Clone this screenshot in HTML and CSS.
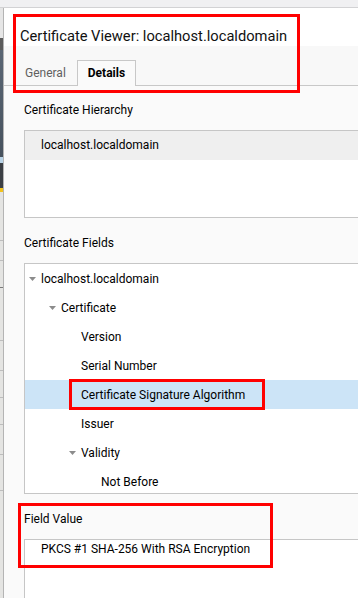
FILE: index.html
```html
<!DOCTYPE html>
<html lang="en">
<head>
<meta charset="utf-8">
<title>Certificate Viewer</title>
<link rel="stylesheet" href="styles.css">
</head>
<body>
<div class="screen">
  <div class="topbar"></div>
  <div class="main">
    <div class="behind">
      <div class="seg seg-light"></div>
      <div class="seg seg-dark"></div>
      <div class="seg seg-blue"></div>
      <div class="seg seg-i"></div>
      <div class="seg seg-dark2"></div>
      <div class="seg seg-yellow"></div>
      <div class="seg seg-list"></div>
    </div>
    <div class="dialog">
      <header class="dlg-head">
        <h1 class="title">Certificate Viewer: localhost.localdomain</h1>
        <nav class="tabs">
          <span class="tab">General</span>
          <span class="tab tab-active">Details</span>
        </nav>
        <div class="mark mark-head"></div>
      </header>
      <section class="content">
        <div class="label">Certificate Hierarchy</div>
        <div class="box box-hier">
          <div class="hier-row">localhost.localdomain</div>
        </div>

        <div class="label">Certificate Fields</div>
        <div class="box box-fields">
          <div class="row lv0"><span class="twisty"><svg width="7" height="4" viewBox="0 0 7 4"><polygon points="0,0 7,0 3.5,4" fill="#8c8c8c"/></svg></span>localhost.localdomain</div>
          <div class="row lv1"><span class="twisty"><svg width="7" height="4" viewBox="0 0 7 4"><polygon points="0,0 7,0 3.5,4" fill="#8c8c8c"/></svg></span>Certificate</div>
          <div class="row lv2"><span class="twisty"></span>Version</div>
          <div class="row lv2"><span class="twisty"></span>Serial Number</div>
          <div class="row lv2 row-sel"><span class="twisty"></span>Certificate Signature Algorithm<div class="mark mark-row"></div></div>
          <div class="row lv2"><span class="twisty"></span>Issuer</div>
          <div class="row lv2"><span class="twisty"><svg width="7" height="4" viewBox="0 0 7 4"><polygon points="0,0 7,0 3.5,4" fill="#8c8c8c"/></svg></span>Validity</div>
          <div class="row lv3"><span class="twisty"></span>Not Before</div>
        </div>

        <div class="value-group">
          <div class="label">Field Value</div>
          <div class="box box-value">PKCS #1 SHA-256 With RSA Encryption</div>
          <div class="mark mark-value"></div>
        </div>
      </section>
    </div>
  </div>
</div>
</body>
</html>
```

FILE: styles.css
```css
html, body {
  margin: 0;
  padding: 0;
  overflow: hidden;
  background: #f0f0f2;
}

.screen {
  width: 358px;
  height: 598px;
  overflow: hidden;
  display: flex;
  flex-direction: column;
  font-family: Roboto, "Noto Sans", sans-serif;
  color: #000;
}

.topbar {
  height: 7px;
  flex: none;
  background: #f0f0f2;
  border-bottom: 1px solid #d2d2d4;
}

.main {
  flex: 1;
  display: flex;
  min-height: 0;
}

.behind {
  width: 3px;
  flex: none;
  display: flex;
  flex-direction: column;
}

.seg { flex: none; }
.seg-light { height: 30px; background: #e6e6e6; }
.seg-dark { height: 12px; background: #5c5c5c; }
.seg-blue { height: 107px; background: linear-gradient(#5a6674, #47525e); }
.seg-i { height: 6px; background: #b9d3e6; }
.seg-dark2 { height: 25px; background: #3b3f44; }
.seg-yellow { height: 4px; background: #f2c21b; }
.seg-list {
  flex: 1;
  background:
    linear-gradient(#bdbdbd, #bdbdbd) 0 48px / 3px 1px no-repeat,
    linear-gradient(#bdbdbd, #bdbdbd) 0 68px / 3px 1px no-repeat,
    linear-gradient(#7a7a7a, #7a7a7a) 0 95px / 3px 1px no-repeat,
    linear-gradient(#bdbdbd, #bdbdbd) 0 148px / 3px 1px no-repeat,
    linear-gradient(#bdbdbd, #bdbdbd) 0 178px / 3px 1px no-repeat,
    linear-gradient(#bdbdbd, #bdbdbd) 0 205px / 3px 1px no-repeat,
    linear-gradient(#bdbdbd, #bdbdbd) 0 232px / 3px 1px no-repeat,
    linear-gradient(#bdbdbd, #bdbdbd) 0 262px / 3px 1px no-repeat,
    linear-gradient(#bdbdbd, #bdbdbd) 0 298px / 3px 1px no-repeat,
    #e4e4e2;
}

.dialog {
  width: 430px;
  flex: none;
  border-left: 1px solid #b4b4b4;
  background: #fafafa;
  display: flex;
  flex-direction: column;
}

.dlg-head {
  position: relative;
  background: #f8f8f8;
  border-bottom: 1px solid #c8c8c8;
}

.title {
  margin: 0;
  padding: 18px 0 0 16px;
  height: 20px;
  background: #fff;
  font-size: 14.7px;
  font-weight: 400;
  line-height: 20px;
  color: #111;
  white-space: nowrap;
}

.tabs {
  display: flex;
  padding: 14px 0 0 10px;
  height: 25px;
  background: #f8f8f8;
}

.tab {
  height: 24px;
  padding: 0 10px;
  font-size: 12px;
  line-height: 25px;
  color: #606060;
  border: 1px solid transparent;
  border-bottom: none;
}

.tab-active {
  font-weight: 700;
  color: #000;
  background: #fafafa;
  border-color: #c8c8c8;
  margin-bottom: -1px;
  height: 25px;
}

.content {
  padding: 16px 0 0 20px;
  display: flex;
  flex-direction: column;
}

.label {
  font-size: 12px;
  line-height: 16px;
  margin-bottom: 12px;
  white-space: nowrap;
}

.box {
  background: #fff;
  border: 1px solid #c6c6c6;
  box-sizing: border-box;
  font-size: 12px;
  white-space: nowrap;
}

.box-hier {
  height: 88px;
  margin-bottom: 17px;
}

.hier-row {
  height: 29px;
  line-height: 29px;
  padding-left: 16px;
  background: #efefef;
}

.box-fields {
  height: 231px;
  overflow: hidden;
  margin-bottom: 17px;
}

.row {
  position: relative;
  height: 29px;
  display: flex;
  align-items: center;
}

.lv0 { padding-left: 4px; }
.lv1 { padding-left: 24px; }
.lv2 { padding-left: 44px; }
.lv3 { padding-left: 64px; }

.twisty {
  width: 12px;
  flex: none;
  display: flex;
  align-items: center;
}

.twisty svg { display: block; }

.row-sel { background: #cce4f7; }

.value-group {
  position: relative;
  display: flex;
  flex-direction: column;
}

.box-value {
  height: 80px;
  padding-left: 16px;
  line-height: 18px;
}

.mark {
  position: absolute;
  border: 3px solid #ff0000;
  box-sizing: border-box;
  pointer-events: none;
}

.mark-head {
  left: 9px;
  top: 6px;
  width: 287px;
  height: 79px;
}

.mark-row {
  left: 44px;
  top: -1px;
  width: 196px;
  height: 31px;
}

.mark-value {
  left: -6px;
  top: -8px;
  width: 255px;
  height: 65px;
}
```
